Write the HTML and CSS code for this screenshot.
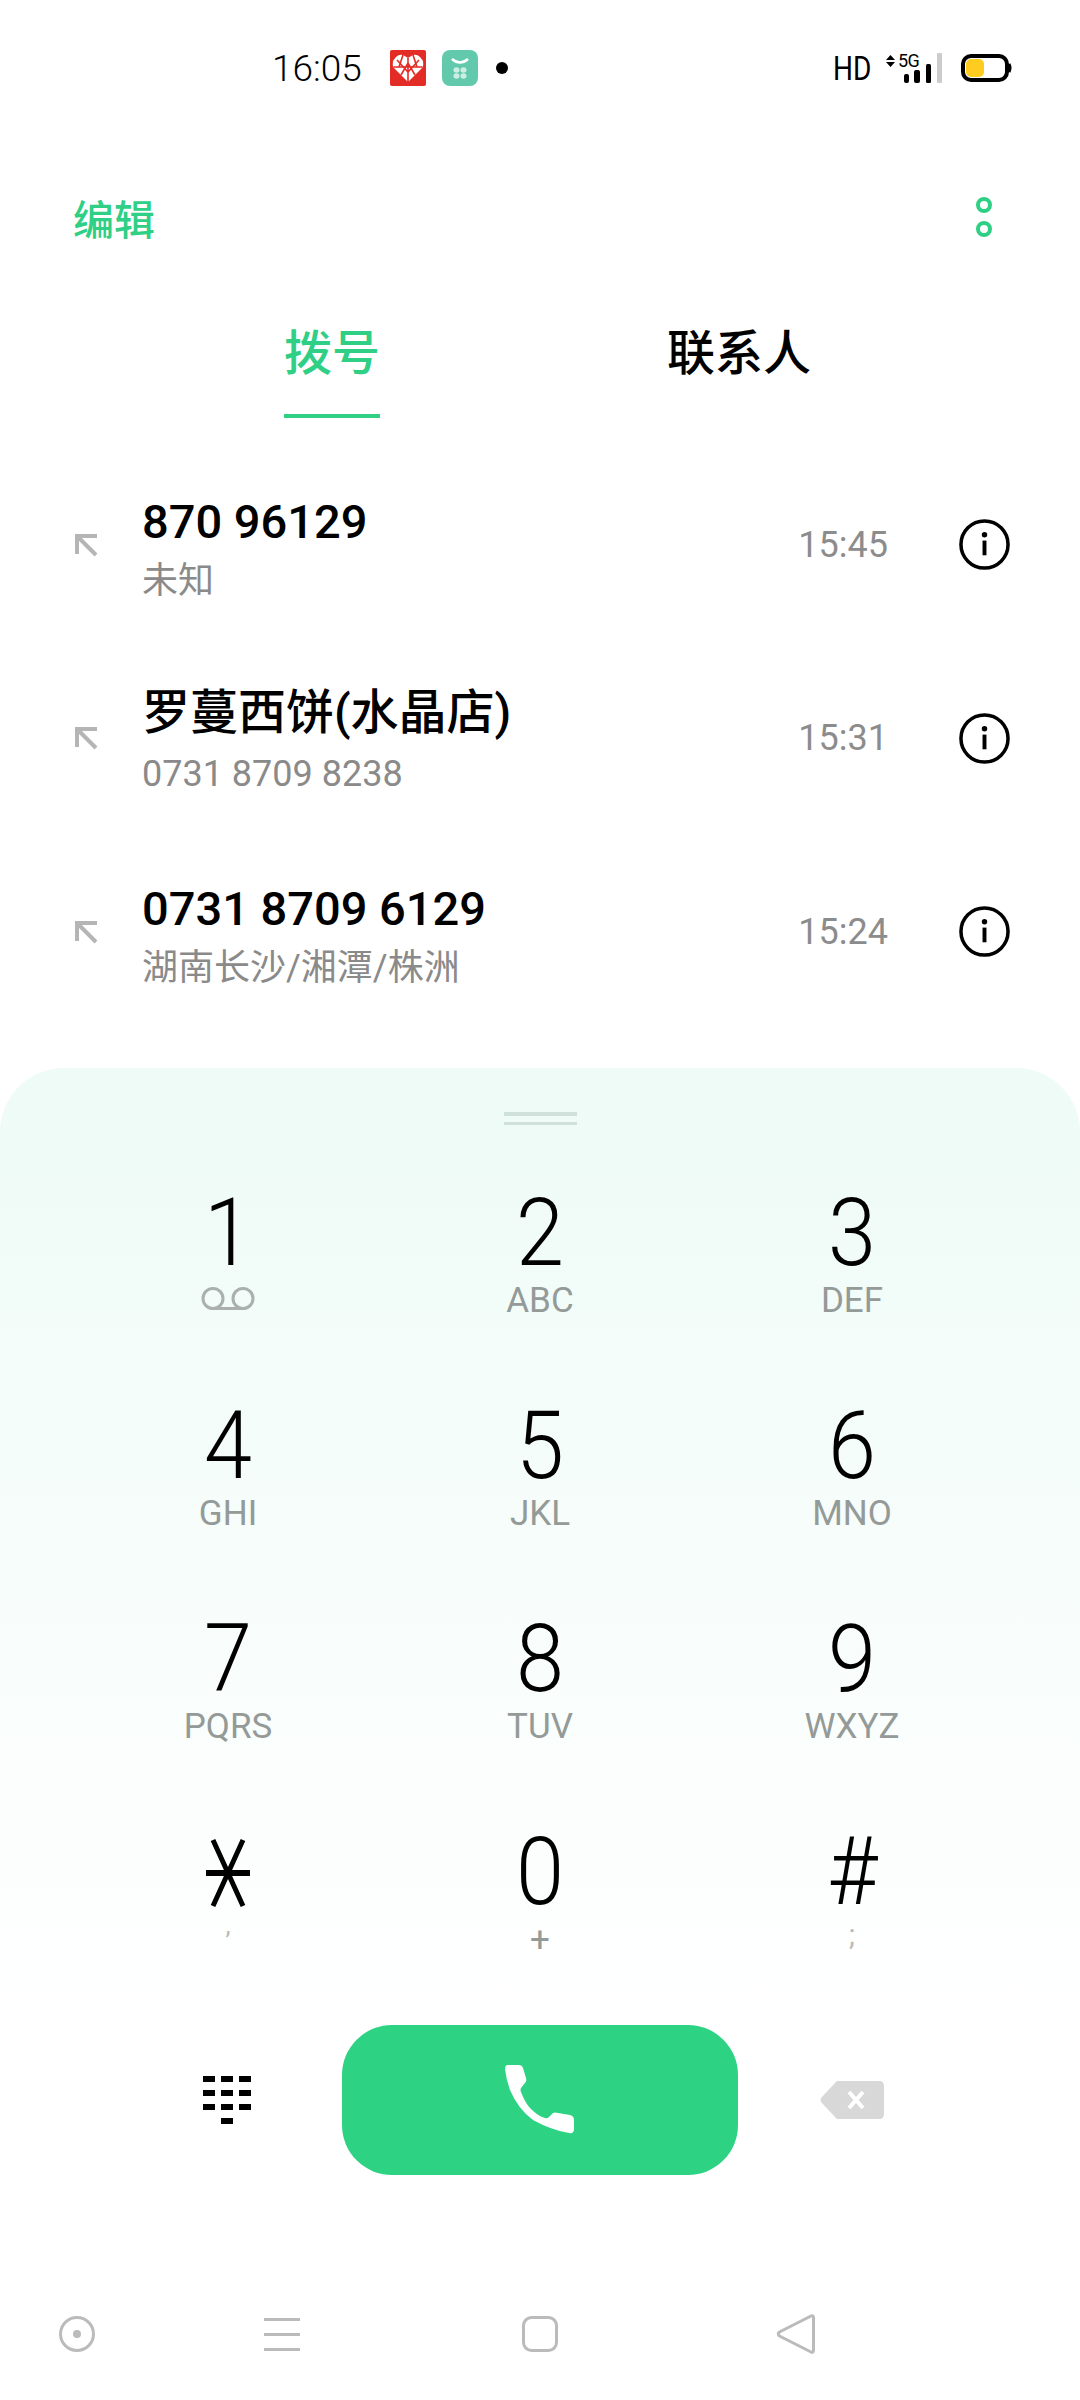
FILE: index.html
```html
<!DOCTYPE html>
<html lang="zh-CN">

    <head>
        <meta charset="UTF-8">
        <meta name="viewport" content="width=device-width, initial-scale=1.0">
        <title>拨号</title>
        <link rel="stylesheet" href="styles.css">
    </head>

    <body>
        <div class="status">
            <span class="time">16:05</span>
            <svg class="app-icon" viewBox="0 0 36 36">
                <rect width="36" height="36" rx="2" fill="#e22c25"/>
                <path d="M18 32 L4 18 Q2 15 3 11 L6 7 Q9 4 13 5 L18 8 L23 5 Q27 4 30 7 L33 11 Q34 15 32 18 Z" fill="#fff"/>
                <path d="M18 8 V32 M7 10 L18 22 L29 10 M4 17 H32 M11 25 L18 13 L25 25 M13 5 L9 17 M23 5 L27 17" stroke="#e22c25" stroke-width="1.6" fill="none"/>
            </svg>
            <svg class="app-icon" viewBox="0 0 36 36">
                <rect width="36" height="36" rx="8" fill="#63c9ac"/>
                <path d="M10 9 Q18 16 26 9" stroke="#fff" stroke-width="2.4" fill="none"/>
                <ellipse cx="14.5" cy="20" rx="3" ry="2.8" fill="#cdeee3"/>
                <ellipse cx="21.5" cy="20" rx="3" ry="2.8" fill="#cdeee3"/>
                <ellipse cx="14.5" cy="26" rx="3" ry="2.8" fill="#cdeee3"/>
                <ellipse cx="21.5" cy="26" rx="3" ry="2.8" fill="#cdeee3"/>
            </svg>
            <span class="dot"></span>

            <div class="status-right">
                <span class="hd">HD</span>
                <svg class="signal" viewBox="0 0 56 30">
                    <path d="M4.5 2 L9 7 H0 Z M4.5 14 L0 9 H9 Z" fill="#000"/>
                    <text x="12" y="14" class="signal-text">5G</text>
                    <rect x="18" y="21" width="5" height="9" rx="2" fill="#000"/>
                    <rect x="28" y="17" width="6" height="13" rx="2" fill="#000"/>
                    <rect x="40" y="11" width="5" height="19" rx="1.5" fill="#000"/>
                    <rect x="51" y="0" width="5" height="30" rx="1" fill="#ccc"/>
                </svg>
                <svg class="battery" viewBox="0 0 50 28">
                    <rect x="2" y="2" width="44" height="24" rx="8" fill="#fff" stroke="#000" stroke-width="4"/>
                    <rect x="5" y="5" width="18" height="18" rx="5" fill="#fecb1f"/>
                    <path d="M48 10 Q50 14 48 18" stroke="#000" stroke-width="3" fill="none"/>
                </svg>
            </div>
        </div>

        <div class="header">
            <span class="edit">编辑</span>
            <svg class="more" viewBox="0 0 16 40">
                <circle cx="8" cy="8" r="6" fill="none" stroke="#2fcf85" stroke-width="4"/>
                <circle cx="8" cy="32" r="6" fill="none" stroke="#2fcf85" stroke-width="4"/>
            </svg>
        </div>

        <div class="tabs">
            <div class="tab tab-active">拨号</div>
            <div class="tab">联系人</div>
        </div>

        <div class="calls">
            <div class="call">
                <svg class="arrow" viewBox="0 0 22 22"><path d="M2 20 V2 H22 M2 2 L21 21" fill="none" stroke="#b5b5b5" stroke-width="4"/></svg>
                <div class="call-text">
                    <div class="call-name">870 96129</div>
                    <div class="call-sub">未知</div>
                </div>
                <span class="call-time">15:45</span>
                <svg class="info" viewBox="0 0 52 52">
                    <circle cx="26" cy="26" r="24" fill="none" stroke="#000" stroke-width="3.6"/>
                    <circle cx="26" cy="16" r="2.8" fill="#000"/>
                    <rect x="24" y="22" width="4" height="15" fill="#000"/>
                </svg>
            </div>
            <div class="call">
                <svg class="arrow" viewBox="0 0 22 22"><path d="M2 20 V2 H22 M2 2 L21 21" fill="none" stroke="#b5b5b5" stroke-width="4"/></svg>
                <div class="call-text">
                    <div class="call-name call-name-cjk">罗蔓西饼(水晶店)</div>
                    <div class="call-sub">0731 8709 8238</div>
                </div>
                <span class="call-time">15:31</span>
                <svg class="info" viewBox="0 0 52 52">
                    <circle cx="26" cy="26" r="24" fill="none" stroke="#000" stroke-width="3.6"/>
                    <circle cx="26" cy="16" r="2.8" fill="#000"/>
                    <rect x="24" y="22" width="4" height="15" fill="#000"/>
                </svg>
            </div>
            <div class="call">
                <svg class="arrow" viewBox="0 0 22 22"><path d="M2 20 V2 H22 M2 2 L21 21" fill="none" stroke="#b5b5b5" stroke-width="4"/></svg>
                <div class="call-text">
                    <div class="call-name">0731 8709 6129</div>
                    <div class="call-sub">湖南长沙/湘潭/株洲</div>
                </div>
                <span class="call-time">15:24</span>
                <svg class="info" viewBox="0 0 52 52">
                    <circle cx="26" cy="26" r="24" fill="none" stroke="#000" stroke-width="3.6"/>
                    <circle cx="26" cy="16" r="2.8" fill="#000"/>
                    <rect x="24" y="22" width="4" height="15" fill="#000"/>
                </svg>
            </div>
        </div>

        <div class="sheet">
            <div class="handle"></div>

            <div class="keypad">
                <div class="key">
                    <div class="digit">1</div>
                    <svg class="voicemail" viewBox="0 0 54 23">
                        <circle cx="12" cy="11.5" r="10" fill="none" stroke="#aab0ae" stroke-width="3"/>
                        <circle cx="42" cy="11.5" r="10" fill="none" stroke="#aab0ae" stroke-width="3"/>
                        <path d="M12 21.5 H42" stroke="#aab0ae" stroke-width="3"/>
                    </svg>
                </div>
                <div class="key"><div class="digit">2</div><div class="letters">ABC</div></div>
                <div class="key"><div class="digit">3</div><div class="letters">DEF</div></div>
                <div class="key"><div class="digit">4</div><div class="letters">GHI</div></div>
                <div class="key"><div class="digit">5</div><div class="letters">JKL</div></div>
                <div class="key"><div class="digit">6</div><div class="letters">MNO</div></div>
                <div class="key"><div class="digit">7</div><div class="letters">PQRS</div></div>
                <div class="key"><div class="digit">8</div><div class="letters">TUV</div></div>
                <div class="key"><div class="digit">9</div><div class="letters">WXYZ</div></div>
                <div class="key">
                    <svg class="star" viewBox="0 0 44 68">
                        <path d="M7 1 L37 67 M37 1 L7 67" stroke="#000" stroke-width="5" fill="none"/>
                        <rect x="0" y="31" width="44" height="6" fill="#000"/>
                    </svg>
                    <div class="letters letters-comma">,</div>
                </div>
                <div class="key"><div class="digit">0</div><div class="letters">+</div></div>
                <div class="key"><div class="digit">#</div><div class="letters letters-semi">;</div></div>
            </div>

            <div class="actions">
                <svg class="dialpad" viewBox="0 0 48 48">
                    <path d="M0 0h12v6H0zM18 0h12v6H18zM36 0h12v6H36zM0 14h12v6H0zM18 14h12v6H18zM36 14h12v6H36zM0 28h12v6H0zM18 28h12v6H18zM36 28h12v6H36zM18 42h12v6H18z" fill="#000"/>
                </svg>
                <div class="call-btn">
                    <svg class="phone" viewBox="0 0 70 69">
                        <path d="M3 0 H14 Q17 0 18 3 L21 13 Q22 16 20 18 L16 23 Q15 25 16 27 Q20 38 26 44 Q33 51 40 53 Q42 54 44 52 L48 48 Q50 47 53 48 L65 50 Q69 51 69 55 V64 Q69 69 64 68 Q46 65 28 55 Q13 44 5 25 Q1 14 0 4 Q0 0 3 0 Z" fill="#fff"/>
                    </svg>
                </div>
                <svg class="backspace" viewBox="0 0 64 38">
                    <path d="M18 0 H59 Q64 0 64 5 V33 Q64 38 59 38 H18 Q16 38 15 36 L1 21 Q0 19 1 17 L15 2 Q16 0 18 0 Z" fill="#d8d8d8"/>
                    <path d="M29 11 L43 27 M43 11 L29 27" stroke="#fff" stroke-width="4" fill="none"/>
                </svg>
            </div>

            <div class="nav">
                <svg class="nav-icon" viewBox="0 0 36 36">
                    <circle cx="18" cy="18" r="16.5" fill="none" stroke="#bbb" stroke-width="3"/>
                    <circle cx="18" cy="18" r="4" fill="#bbb"/>
                </svg>
                <svg class="nav-icon" viewBox="0 0 36 36">
                    <path d="M0 3.5 H36 M0 18.5 H36 M0 33.5 H36" stroke="#bbb" stroke-width="3"/>
                </svg>
                <svg class="nav-icon" viewBox="0 0 36 36">
                    <rect x="1.5" y="1.5" width="33" height="33" rx="8" fill="none" stroke="#bbb" stroke-width="3"/>
                </svg>
                <svg class="nav-icon nav-back" viewBox="0 0 38 40">
                    <path d="M34 2 Q36.5 1 36.5 4 V36 Q36.5 39 34 38 L2.5 22 Q0 20 2.5 18 Z" fill="none" stroke="#bbb" stroke-width="3"/>
                </svg>
            </div>
        </div>
    </body>

</html>
```

FILE: styles.css
```css
* {
    margin: 0;
    padding: 0;
    box-sizing: border-box;
}

body {
    display: flex;
    flex-direction: column;
    width: 1080px;
    height: 2400px;
    overflow: hidden;
    background-color: white;
    color: black;
    font-family: Roboto, "Noto Sans CJK SC", sans-serif;
}

svg {
    display: block;
    overflow: visible;
}

/* barra de status */

.status {
    display: flex;
    align-items: center;
    height: 136px;
    padding: 0 69px 0 272px;
}

.time {
    width: 92px;
    margin-right: 26px;
    font-size: 37px;
    font-weight: 350;
}

.app-icon {
    width: 36px;
    height: 36px;
    margin-right: 16px;
}

.dot {
    width: 12px;
    height: 12px;
    margin-left: 2px;
    border-radius: 50%;
    background-color: black;
}

.status-right {
    display: flex;
    align-items: center;
    margin-left: auto;
}

.hd {
    width: 35px;
    margin-left: -3px;
    margin-right: 18px;
    font-size: 33px;
    line-height: 33px;
    transform: scaleX(0.85);
    transform-origin: left;
}

.signal {
    width: 56px;
    height: 30px;
    margin-right: 19px;
}

.signal-text {
    font-size: 18px;
    letter-spacing: -0.5px;
}

.battery {
    width: 50px;
    height: 28px;
}

/* topo */

.header {
    display: flex;
    align-items: center;
    justify-content: space-between;
    height: 162px;
    margin-bottom: 2px;
    padding: 0 88px 0 73px;
}

.edit {
    color: #2fcf85;
    font-size: 41px;
    font-weight: 500;
}

.more {
    width: 16px;
    height: 40px;
}

.tabs {
    display: flex;
    gap: 287px;
    height: 118px;
    padding-left: 284px;
}

.tab {
    padding-top: 24px;
    padding-bottom: 30px;
    font-size: 48px;
    line-height: 60px;
    font-weight: 500;
    border-bottom: 4px solid transparent;
}

.tab-active {
    color: #2fcf85;
    border-bottom-color: #2fcf85;
}

/* chamadas */

.calls {
    margin-top: 30px;
}

.call {
    display: flex;
    align-items: center;
    height: 193.5px;
    padding: 0 70px 0 75px;
}

.arrow {
    width: 22px;
    height: 22px;
    margin-right: 45px;
}

.call-text {
    flex: 1;
    padding-top: 9px;
}

.call-name {
    font-size: 47px;
    line-height: 60px;
    font-weight: 500;
}

.call-name-cjk {
    margin-bottom: 4px;
    font-size: 48px;
    line-height: 56px;
}

.call-sub {
    padding-top: 3px;
    color: #8a8a8a;
    font-size: 36px;
    line-height: 52px;
}

.call-time {
    margin-right: 71px;
    color: #8c8c8c;
    font-size: 36px;
}

.info {
    width: 51px;
    height: 51px;
}

/* teclado */

.sheet {
    flex: 1;
    margin-top: 39px;
    padding-top: 44px;
    border-radius: 64px 64px 0 0;
    background: linear-gradient(#eefbf6, white 72%);
}

.handle {
    width: 73px;
    height: 13px;
    margin: 0 auto 68px;
    border-top: 4px solid #d0e0da;
    border-bottom: 3px solid #d0e0da;
}

.keypad {
    display: grid;
    grid-template-columns: repeat(3, 312px);
    grid-auto-rows: 120px;
    row-gap: 93px;
    padding-left: 72px;
}

.key {
    display: flex;
    flex-direction: column;
    align-items: center;
}

.digit {
    height: 80px;
    margin-bottom: 8px;
    font-size: 94px;
    line-height: 80px;
    font-weight: 300;
    transform: scaleX(0.92);
}

.letters {
    height: 40px;
    color: #949a98;
    font-size: 35px;
    line-height: 40px;
}

.letters-comma {
    color: #bbb;
    font-size: 26px;
    line-height: 10px;
}

.letters-semi {
    color: #bbb;
    font-size: 30px;
    line-height: 30px;
}

.voicemail {
    width: 54px;
    height: 23px;
    margin-top: 6px;
}

.star {
    width: 44px;
    height: 68px;
    margin-top: 7px;
    margin-bottom: 13px;
}

.actions {
    display: grid;
    grid-template-columns: repeat(3, 312px);
    justify-items: center;
    align-items: center;
    height: 150px;
    margin-top: 73px;
    padding-left: 72px;
}

.dialpad {
    width: 48px;
    height: 48px;
    margin-right: 3px;
}

.call-btn {
    display: flex;
    align-items: center;
    justify-content: center;
    flex-shrink: 0;
    width: 396px;
    height: 150px;
    border-radius: 50px;
    background-color: #2dd283;
}

.phone {
    width: 70px;
    height: 69px;
}

.backspace {
    width: 64px;
    height: 38px;
}

/* navegação */

.nav {
    display: grid;
    grid-template-columns: 205px 258px 255px auto;
    margin-top: 141px;
    padding-left: 59px;
}

.nav-icon {
    width: 36px;
    height: 36px;
}

.nav-back {
    width: 38px;
    height: 40px;
    margin-top: -2px;
}
```
